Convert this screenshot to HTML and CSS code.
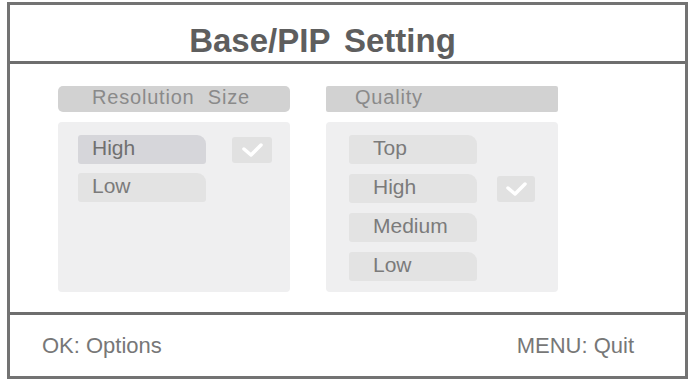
FILE: index.html
```html
<!DOCTYPE html>
<html>
<head>
<meta charset="utf-8">
<link rel="stylesheet" href="styles.css">
</head>
<body>
<div class="frame">
  <div class="header">Base/PIP Setting</div>
  <div class="content">
    <div class="panel res">
      <div class="panel-title">Resolution Size</div>
      <div class="panel-body">
        <div class="row">
          <div class="item selected">High</div>
          <div class="check"><svg width="40" height="26" viewBox="0 0 40 26"><polyline points="12,12 19,18 29,8" fill="none" stroke="#fff" stroke-width="3.5" stroke-linecap="round" stroke-linejoin="round"/></svg></div>
        </div>
        <div class="row">
          <div class="item">Low</div>
        </div>
      </div>
    </div>
    <div class="panel qual">
      <div class="panel-title">Quality</div>
      <div class="panel-body">
        <div class="row"><div class="item">Top</div></div>
        <div class="row">
          <div class="item">High</div>
          <div class="check"><svg width="38" height="26" viewBox="0 0 38 26"><polyline points="11,12 18,18 28,8" fill="none" stroke="#fff" stroke-width="3.5" stroke-linecap="round" stroke-linejoin="round"/></svg></div>
        </div>
        <div class="row"><div class="item">Medium</div></div>
        <div class="row"><div class="item">Low</div></div>
      </div>
    </div>
  </div>
  <div class="footer">
    <span>OK: Options</span>
    <span>MENU: Quit</span>
  </div>
</div>
</body>
</html>
```

FILE: styles.css
```css
html, body {
  margin: 0;
  padding: 0;
  background: #fff;
}
body {
  font-family: "Liberation Sans", Arial, sans-serif;
}
.frame {
  box-sizing: border-box;
  margin: 2px 0 0 7px;
  width: 681px;
  height: 377px;
  border: 3px solid #737373;
  display: flex;
  flex-direction: column;
}
.header {
  box-sizing: border-box;
  height: 59px;
  border-bottom: 3px solid #6e6e6e;
  padding: 19px 50px 0 0;
  text-align: center;
  font-weight: bold;
  font-size: 33px;
  line-height: 33px;
  color: #5e5e5e;
  word-spacing: 5px;
}
.content {
  box-sizing: border-box;
  height: 248px;
  padding: 22px 0 0 48px;
  display: flex;
  gap: 36px;
}
.panel {
  width: 232px;
  display: flex;
  flex-direction: column;
  gap: 10px;
}
.panel-title {
  box-sizing: border-box;
  height: 26px;
  line-height: 23px;
  padding-bottom: 3px;
  background: #d2d2d2;
  border-radius: 5px;
  font-size: 20px;
  color: #8a8a8a;
  letter-spacing: 0.8px;
}
.res .panel-title {
  padding-left: 34px;
  word-spacing: 7px;
}
.qual .panel-title {
  padding-left: 29px;
  border-radius: 2px;
}
.panel-body {
  height: 170px;
  box-sizing: border-box;
  background: #efeff0;
  border-radius: 4px;
  padding: 13px 0 0 20px;
  display: flex;
  flex-direction: column;
  gap: 9px;
}
.qual .panel-body {
  padding-left: 23px;
  gap: 10px;
}
.row {
  display: flex;
  align-items: center;
}
.item {
  box-sizing: border-box;
  width: 128px;
  height: 29px;
  line-height: 26px;
  padding-bottom: 3px;
  background: #e3e3e3;
  border-radius: 3px 9px 3px 3px;
  font-size: 21px;
  color: #7b7b7b;
  padding-left: 14px;
}
.item.selected {
  background: #d6d6da;
  color: #707070;
}
.qual .item {
  padding-left: 24px;
}
.check {
  margin-left: 26px;
  height: 26px;
  background: #e1e1e1;
  border-radius: 3px;
  display: flex;
}
.qual .check {
  margin-left: 20px;
}
.footer {
  flex: 1;
  border-top: 3px solid #6e6e6e;
  display: flex;
  justify-content: space-between;
  align-items: center;
  padding: 0 51px 0 32px;
  font-size: 22px;
  color: #777;
}
```
